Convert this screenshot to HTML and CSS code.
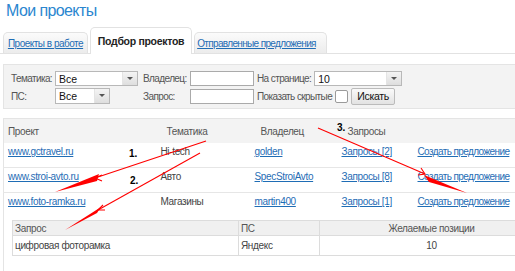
FILE: index.html
```html
<!DOCTYPE html>
<html lang="ru">
<head>
    <meta charset="UTF-8">
    <meta name="viewport" content="width=device-width, initial-scale=1.0">
    <title>Мои проекты</title>
    <link rel="stylesheet" href="styles.css">
</head>
<body>
    <h1 class="title">Мои проекты</h1>

    <div class="tabs">
        <a href="#" class="tab tab-work">Проекты в работе</a>
        <span class="tab tab-active">Подбор проектов</span>
        <a href="#" class="tab tab-sent">Отправленные предложения</a>
    </div>

    <div class="filters">
        <label>Тематика:</label>
        <div class="select select-wide"><span>Все</span><i></i></div>
        <label>Владелец:</label>
        <input type="text" class="field">
        <div class="group">
            <label>На странице:</label>
            <div class="select select-pages"><span>10</span><i></i></div>
        </div>

        <label>ПС:</label>
        <div class="select select-short"><span>Все</span><i></i></div>
        <label>Запрос:</label>
        <input type="text" class="field">
        <div class="group">
            <label>Показать скрытые</label>
            <span class="check"></span>
            <button class="btn">Искать</button>
        </div>
    </div>

    <table class="projects">
        <colgroup>
            <col class="c-project"><col class="c-theme"><col class="c-owner"><col class="c-req"><col>
        </colgroup>
        <tr>
            <th>Проект</th>
            <th class="shift">Тематика</th>
            <th class="shift">Владелец</th>
            <th class="shift">Запросы</th>
            <th></th>
        </tr>
        <tr class="row">
            <td><a href="#">www.gctravel.ru</a></td>
            <td>Hi-tech</td>
            <td><a href="#">golden</a></td>
            <td><a href="#">Запросы [2]</a></td>
            <td class="offer"><a href="#">Создать предложение</a></td>
        </tr>
        <tr class="row">
            <td><a href="#">www.stroi-avto.ru</a></td>
            <td>Авто</td>
            <td><a href="#">SpecStroiAvto</a></td>
            <td><a href="#">Запросы [8]</a></td>
            <td class="offer"><a href="#">Создать предложение</a></td>
        </tr>
        <tr class="row open">
            <td><a href="#">www.foto-ramka.ru</a></td>
            <td>Магазины</td>
            <td><a href="#">martin400</a></td>
            <td><a href="#">Запросы [1]</a></td>
            <td class="offer"><a href="#">Создать предложение</a></td>
        </tr>
        <tr>
            <td colspan="5" class="details">
                <table class="queries">
                    <colgroup>
                        <col class="q-query"><col class="q-ps"><col>
                    </colgroup>
                    <tr>
                        <th>Запрос</th>
                        <th>ПС</th>
                        <th class="center">Желаемые позиции</th>
                    </tr>
                    <tr>
                        <td>цифровая фоторамка</td>
                        <td>Яндекс</td>
                        <td class="center">10</td>
                    </tr>
                </table>
            </td>
        </tr>
    </table>

    <!-- пометки поверх скриншота -->
    <svg class="marks" width="515" height="271" viewBox="0 0 515 271">
        <g stroke="#ff0000" stroke-width="1.1" fill="none">
            <line x1="206" y1="141" x2="95" y2="178"/>
            <polyline points="102,175 95,178 102,181"/>
            <line x1="200" y1="153" x2="98" y2="210"/>
            <polyline points="103,205 98,210 105,210"/>
            <line x1="318" y1="128" x2="425" y2="174"/>
            <polyline points="421,168 425,174 418,175"/>
        </g>
        <g fill="#ff0000">
            <polygon points="99,174 97,181 55,192"/>
            <polygon points="101,207 97,213 65,230"/>
            <polygon points="424,175 429,182 467,193"/>
        </g>
        <g class="num">
            <text x="129" y="157">1.</text>
            <text x="130" y="184">2.</text>
            <text x="337" y="131">3.</text>
        </g>
    </svg>
</body>
</html>
```

FILE: styles.css
```css
html, body {
    overflow: hidden;
}
body {
    margin: 0;
    width: 515px;
    height: 271px;
    position: relative;
    font-family: "Liberation Sans", Arial, sans-serif;
    font-size: 10px;
    letter-spacing: -0.35px;
    color: #444;
    background: #fff;
}
a {
    color: #1f6db5;
}

.title {
    margin: 0;
    padding: 2px 0 0 6px;
    height: 25px;
    font-size: 16px;
    line-height: 18px;
    letter-spacing: -0.6px;
    font-weight: normal;
    color: #2b86cf;
}

.tabs {
    display: flex;
    align-items: flex-end;
    height: 26px;
    padding-left: 3px;
    border-bottom: 1px solid #e2e2e2;
}
.tab {
    height: 21px;
    line-height: 21px;
    margin-right: 2px;
    text-align: center;
    white-space: nowrap;
    letter-spacing: -0.5px;
    border: 1px solid #e2e2e2;
    border-bottom: none;
    border-radius: 5px 5px 0 0;
    background: linear-gradient(#fbfbfb, #ececec);
    box-sizing: border-box;
}
.tab-work { width: 85px; }
.tab-sent {
    width: 133px;
    padding-right: 8px;
    letter-spacing: -0.65px;
}
.tab-active {
    width: 102px;
    height: 27px;
    line-height: 26px;
    margin-bottom: -1px;
    background: #fff;
    color: #222;
    font-weight: bold;
    font-size: 10.5px;
    letter-spacing: -0.3px;
}

.filters {
    display: grid;
    grid-template-columns: 44px 88px 47px 67px auto;
    grid-auto-rows: 16px;
    row-gap: 2px;
    align-items: center;
    width: 540px;
    margin: 10px 0 0 3px;
    padding: 5px 0 4px 7px;
    background: #f3f3f3;
    border: 1px solid #e4e4e4;
    box-sizing: border-box;
    color: #555;
}
.filters label {
    white-space: nowrap;
    letter-spacing: -0.6px;
}
.select {
    position: relative;
    height: 15px;
    line-height: 14px;
    background: #fff;
    border: 1px solid #b8b8b8;
    box-sizing: border-box;
    padding-left: 3px;
    color: #111;
    font-size: 10.5px;
    letter-spacing: 0;
}
.select i {
    position: absolute;
    right: 0;
    top: 0;
    bottom: 0;
    width: 14px;
    background: linear-gradient(#f4f4f4, #dedede);
    border-left: 1px solid #e4e4e4;
}
.select i::after {
    content: "";
    position: absolute;
    left: 4px;
    top: 5px;
    border-left: 3px solid transparent;
    border-right: 3px solid transparent;
    border-top: 3px solid #555;
}
.select-wide { width: 83px; }
.select-short { width: 55px; height: 16px; }
.select-pages { width: 88px; }
.field {
    width: 64px;
    height: 15px;
    margin: 0;
    padding: 0;
    border: 1px solid #aaa;
    box-sizing: border-box;
    background: #fff;
}
.group {
    display: flex;
    align-items: center;
    gap: 3px;
}
.check {
    width: 11px;
    height: 11px;
    border: 1px solid #9a9a9a;
    border-radius: 2px;
    background: #fff;
}
.btn {
    width: 44px;
    height: 17px;
    margin: 0;
    padding: 0;
    font-family: inherit;
    font-size: 10.5px;
    letter-spacing: -0.3px;
    color: #111;
    border: 1px solid #bbb;
    border-radius: 2px;
    background: linear-gradient(#fafafa, #e2e2e2);
}

.projects {
    width: 540px;
    margin: 9px 0 0 3px;
    border: 1px solid #e4e4e4;
    border-collapse: collapse;
    table-layout: fixed;
}
.c-project { width: 153px; }
.c-theme { width: 94px; }
.c-owner { width: 87px; }
.c-req { width: 76px; }
.projects th {
    height: 24px;
    padding: 0 0 0 4px;
    background: #f3f3f3;
    color: #555;
    font-weight: normal;
    text-align: left;
}
.projects th.shift {
    padding-left: 10px;
}
.row td {
    height: 12px;
    padding: 3px 0 9px 4px;
    line-height: 12px;
    border-bottom: 1px solid #e6e6e6;
    white-space: nowrap;
}
.row td.offer {
    letter-spacing: -0.6px;
}
.row.open td {
    padding-bottom: 0;
    border-bottom: none;
}
.details {
    padding: 12px 0 40px 8px;
}

.queries {
    width: 100%;
    border-collapse: collapse;
    border: 1px solid #dcdcdc;
    table-layout: fixed;
}
.q-query { width: 226px; }
.q-ps { width: 81px; }
.queries th,
.queries td {
    padding: 0 0 0 2px;
    border: 1px solid #dcdcdc;
    text-align: left;
    color: #555;
}
.queries th {
    height: 14px;
    background: #f0f0f0;
    font-weight: normal;
}
.queries td {
    height: 19px;
    color: #444;
}
.queries .center {
    text-align: center;
}

.marks {
    position: absolute;
    left: 0;
    top: 0;
    pointer-events: none;
}
.num text {
    font-family: "Liberation Sans", Arial, sans-serif;
    font-size: 10px;
    font-weight: bold;
    letter-spacing: 0;
    fill: #000;
}
```
